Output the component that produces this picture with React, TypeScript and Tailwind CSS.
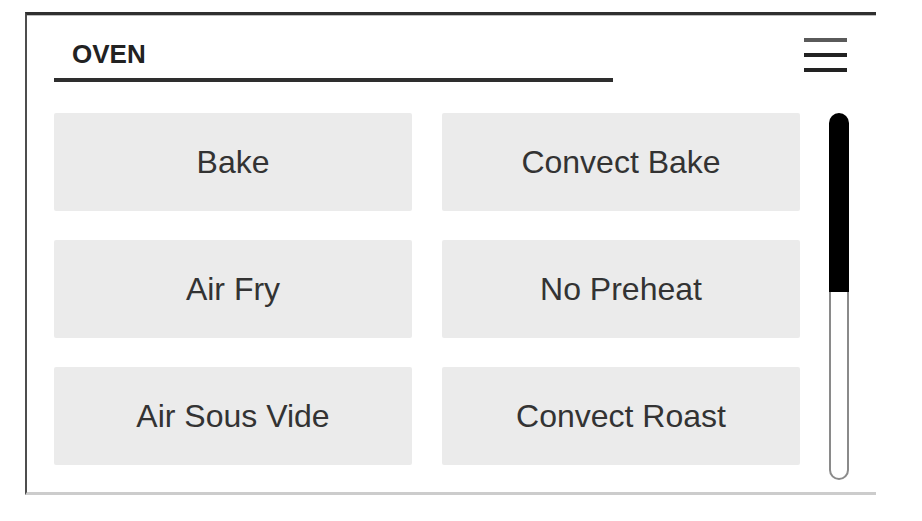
const modes = ["Bake", "Convect Bake", "Air Fry", "No Preheat", "Air Sous Vide", "Convect Roast"];

function Hamburger() {
  return (
    <svg width="43" height="36" viewBox="0 0 43 36" className="block">
      <line x1="0" y1="2" x2="43" y2="2" stroke="#5a5a5a" strokeWidth="4" />
      <line x1="0" y1="17" x2="43" y2="17" stroke="#222" strokeWidth="4" />
      <line x1="0" y1="32" x2="43" y2="32" stroke="#222" strokeWidth="4" />
    </svg>
  );
}

export default function App() {
  return (
    <div className="w-[922px] h-[521px] bg-white pt-[12px] pl-[25px] font-['Liberation_Sans',Arial,sans-serif]">
      <div className="w-[851px] h-[483px] border-t-[3px] border-t-[#2f2f2f] border-l-2 border-l-[#4d4d4d] border-b-[3px] border-b-[#cccccc] shadow-[inset_0_1px_0_#bdbdbd] pl-[27px]">
        {/* Header */}
        <div className="w-[795px] pt-[23px] pr-[2px] flex items-start justify-between">
          <div className="w-[559px] mt-[3px] pb-[11px] border-b-4 border-[#2e2e2e]">
            <span className="block text-[26px] leading-[26px] font-bold text-[#222] pl-[18px]">OVEN</span>
          </div>
          <Hamburger />
        </div>

        {/* Body */}
        <div className="mt-[31px] flex items-start">
          <div className="w-[746px] grid grid-cols-2 gap-x-[30px] gap-y-[29px]">
            {modes.map((m) => (
              <div
                key={m}
                className="h-[98px] bg-[#ebebeb] rounded-[2px] flex items-center justify-center text-[32px] text-[#333]"
              >
                {m}
              </div>
            ))}
          </div>
          <div className="ml-[29px] w-[20px] h-[367px] flex flex-col">
            <div className="h-[179px] bg-black rounded-t-full" />
            <div className="flex-1 border-2 border-t-0 border-[#8a8a8a] rounded-b-full bg-white" />
          </div>
        </div>
      </div>
    </div>
  );
}
